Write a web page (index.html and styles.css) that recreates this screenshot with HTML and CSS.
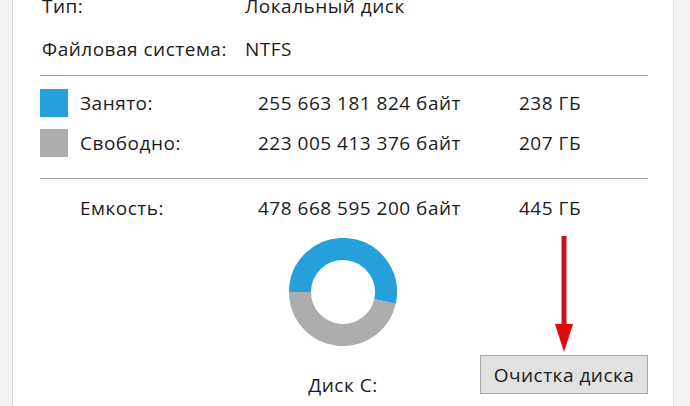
FILE: index.html
```html
<!DOCTYPE html>
<html lang="ru">
<head>
    <meta charset="UTF-8">
    <meta name="viewport" content="width=device-width, initial-scale=1.0">
    <title>Свойства: Локальный диск (C:)</title>
    <link rel="stylesheet" href="styles.css">
</head>
<body>
    <div class="panel">
        <div class="info">
            <div class="info-row">
                <span>Тип:</span>
                <span>Локальный диск</span>
            </div>
            <div class="info-row">
                <span>Файловая система:</span>
                <span>NTFS</span>
            </div>
        </div>

        <hr class="divider">

        <div class="stats">
            <div class="stat-row">
                <span class="swatch used"></span>
                <span>Занято:</span>
                <span>255 663 181 824 байт</span>
                <span>238 ГБ</span>
            </div>
            <div class="stat-row">
                <span class="swatch free"></span>
                <span>Свободно:</span>
                <span>223 005 413 376 байт</span>
                <span>207 ГБ</span>
            </div>
        </div>

        <hr class="divider second">

        <div class="stat-row capacity">
            <span></span>
            <span>Емкость:</span>
            <span>478 668 595 200 байт</span>
            <span>445 ГБ</span>
        </div>

        <div class="lower">
            <div class="disk">
                <svg class="donut" width="108" height="108" viewBox="0 0 108 108">
                    <path d="M 95.96 63.38 A 43 43 0 0 1 11 54" fill="none" stroke="#adadad" stroke-width="22"/>
                    <path d="M 11 54 A 43 43 0 1 1 95.96 63.38" fill="none" stroke="#26a0da" stroke-width="22"/>
                </svg>
                <div class="disk-name">Диск C:</div>
            </div>
            <div class="cleanup">
                <svg class="arrow" width="20" height="116" viewBox="0 0 20 116">
                    <rect x="7.5" y="0" width="5" height="92" fill="#c4161c"/>
                    <polygon points="1,88 19,88 10,116" fill="#e3080d"/>
                </svg>
                <button class="clean-btn">Очистка диска</button>
            </div>
        </div>
    </div>
</body>
</html>
```

FILE: styles.css
```css
body {
    margin: 0px;
    background-color: #f2f2f2;
    font-family: "Open Sans", "Liberation Sans", sans-serif;
    font-size: 19px;
    letter-spacing: 0.5px;
    line-height: 24px;
    color: #1b1b1b;
}
.panel {
    margin-left: 12px;
    width: 660px;
    height: 406px;
    background-color: #ffffff;
    border-left: 1px solid #d6d6d6;
    border-right: 1px solid #e2e2e2;
    overflow: hidden;
}
.info {
    display: flex;
    flex-direction: column;
    gap: 19px;
    margin-top: -6px;
    padding-left: 29px;
}
.info-row {
    display: grid;
    grid-template-columns: 203px 1fr;
}
.divider {
    margin: 14px 25px 0px 27px;
    border: none;
    border-top: 1px solid #a3a3a3;
    height: 0px;
}
.divider.second {
    margin-top: 21px;
}
.stats {
    display: flex;
    flex-direction: column;
    gap: 12px;
    margin-top: 13px;
}
.stat-row {
    display: grid;
    grid-template-columns: 40px 178px 261px 1fr;
    align-items: center;
    height: 28px;
    padding-left: 27px;
}
.stat-row.capacity {
    height: 24px;
    margin-top: 17px;
}
.swatch {
    width: 28px;
    height: 28px;
}
.swatch.used {
    background-color: #26a0da;
}
.swatch.free {
    background-color: #adadad;
}
.lower {
    display: flex;
    padding-left: 276px;
    gap: 83px;
}
.disk {
    display: flex;
    flex-direction: column;
    align-items: center;
    width: 108px;
    margin-top: 18px;
}
.donut {
    display: block;
}
.disk-name {
    margin-top: 27px;
}
.cleanup {
    display: flex;
    flex-direction: column;
    align-items: center;
    margin-top: 16px;
    gap: 3px;
}
.arrow {
    display: block;
}
.clean-btn {
    width: 168px;
    height: 39px;
    padding: 0px;
    background-color: #e1e1e1;
    border: 1px solid #adadad;
    font-family: "Open Sans", "Liberation Sans", sans-serif;
    font-size: 19px;
    letter-spacing: 0.5px;
    color: #1b1b1b;
}
```
